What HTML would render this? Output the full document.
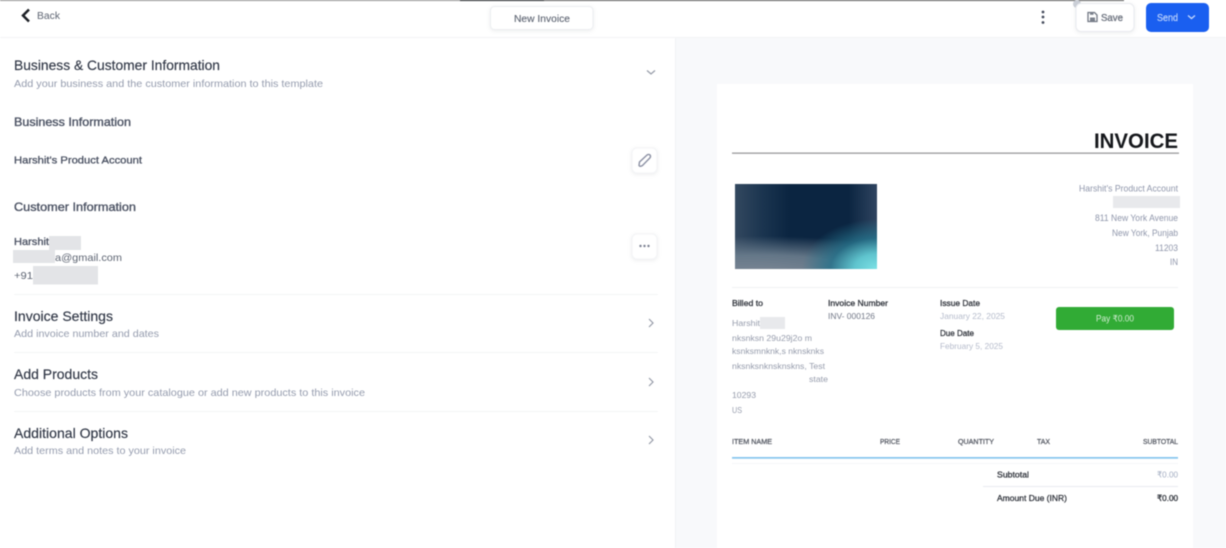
<!DOCTYPE html>
<html lang="en">
<head>
<meta charset="utf-8">
<title>New Invoice</title>
<style>
html,body{margin:0;padding:0;width:1226px;height:548px;overflow:hidden;background:#fff}
#wrap{position:relative;width:1226px;height:548px;overflow:hidden;filter:blur(.45px)}
#logo{position:absolute;left:735px;top:184px;width:142px;height:85px;
background:
radial-gradient(ellipse 75px 50px at 100% 100%,#7ce2e6 0%,#5fc4ce 30%,rgba(38,115,140,.8) 62%,rgba(11,37,64,0) 100%),
radial-gradient(ellipse 190px 38px at 20% 106%,#7c8795 0%,rgba(108,126,142,.9) 50%,rgba(11,37,64,0) 100%),
linear-gradient(90deg,#33485f 0%,#1a344f 20%,#0b2541 38%,#0b2541 80%,#2f4460 100%)}
svg{position:absolute;left:0;top:0}
text{font-family:"Liberation Sans","DejaVu Sans",sans-serif}
.sh{filter:drop-shadow(0 1px 2px rgba(30,40,60,.09))}
.t{font-size:14px;fill:#2f3645;stroke:#2f3645;stroke-width:.15}
.s{font-size:10.5px;fill:#959cae}
.h{font-size:12px;fill:#4a5162;stroke:#4a5162;stroke-width:.35}
.m{font-size:10.5px;fill:#4a5162;stroke:#4a5162;stroke-width:.3}
.b{font-size:10.5px;fill:#5d6472}
.r{font-size:9px;fill:#8f96ab}
.l{font-size:8.5px;fill:#30343c;stroke:#30343c;stroke-width:.28}
.g{font-size:8.5px;fill:#969cac}
.d{font-size:8.5px;fill:#b5bbcb}
.th{font-size:7px;fill:#555963;stroke:#555963;stroke-width:.25}
</style>
</head>
<body>
<div id="wrap">
<svg width="1226" height="548" viewBox="0 0 1226 548" xmlns="http://www.w3.org/2000/svg" style="z-index:0">
  <rect x="675" y="38" width="551" height="510" fill="#f8f9fb"/>
  <rect x="717" y="84" width="476" height="464" fill="#fff"/>
</svg>
<div id="logo"></div>
<svg width="1226" height="548" viewBox="0 0 1226 548" xmlns="http://www.w3.org/2000/svg">
  <!-- top strip -->
  <rect x="0" y="0" width="460" height="1" fill="#8f8f8f"/>
  <rect x="460" y="0" width="84" height="1" fill="#15181c"/>
  <rect x="544" y="0" width="580" height="1" fill="#555"/>
  <rect x="0" y="37" width="1226" height="1" fill="#f3f4f6"/>
  <rect x="675" y="38" width="1" height="510" fill="#f1f2f5"/>

  <!-- header -->
  <path d="M29 9.500 L23 15.500 L29 21.500" fill="none" stroke="#1d2026" stroke-width="2.500"/>
  <text x="37" y="19" font-size="10" fill="#5d6472" textLength="23" lengthAdjust="spacingAndGlyphs">Back</text>
  <rect class="sh" x="490.500" y="6.500" width="102.500" height="23" rx="4" fill="#fff" stroke="#eceef1"/>
  <text x="514" y="22" font-size="10.500" fill="#5d6472" stroke="#5d6472" stroke-width=".12" textLength="56" lengthAdjust="spacingAndGlyphs">New Invoice</text>
  <circle cx="1043" cy="12" r="1.400" fill="#454c5c"/>
  <circle cx="1043" cy="17" r="1.400" fill="#454c5c"/>
  <circle cx="1043" cy="22.500" r="1.400" fill="#454c5c"/>
  <circle cx="1077" cy="4" r="4" fill="#ccd0d8"/>
  <rect class="sh" x="1076" y="3.500" width="58" height="28" rx="5" fill="#fff" stroke="#e9ebef"/>
  <path d="M1088 12.500h6.500l2.500 2.500v6.500h-9z" fill="none" stroke="#717783" stroke-width="1.300"/>
  <rect x="1090" y="17.500" width="5" height="3.500" fill="#7b818c"/>
  <rect x="1090" y="13" width="3.500" height="1.800" fill="#7b818c"/>
  <text x="1101" y="21" font-size="10" fill="#6f7581" stroke="#6f7581" stroke-width=".35" textLength="22" lengthAdjust="spacingAndGlyphs">Save</text>
  <rect x="1146" y="3" width="63" height="29" rx="5" fill="#1a5ff0"/>
  <text x="1157" y="21" font-size="10" fill="#b5cdfb" stroke="#b5cdfb" stroke-width=".3" textLength="21" lengthAdjust="spacingAndGlyphs">Send</text>
  <path d="M1188 15.500l3.500 3 3.500-3" fill="none" stroke="#c6d8fc" stroke-width="1.300"/>

  <!-- left panel -->
  <text class="t" x="14" y="70" textLength="206" lengthAdjust="spacingAndGlyphs">Business &amp; Customer Information</text>
  <text class="s" x="14" y="87" textLength="309" lengthAdjust="spacingAndGlyphs">Add your business and the customer information to this template</text>
  <path d="M647 70.500l4 3.500 4-3.500" fill="none" stroke="#959aa7" stroke-width="1.200"/>

  <text class="h" x="14" y="126" textLength="117" lengthAdjust="spacingAndGlyphs">Business Information</text>
  <text class="m" x="14" y="163.500" textLength="128" lengthAdjust="spacingAndGlyphs">Harshit's Product Account</text>
  <rect class="sh" x="632" y="148" width="25" height="25" rx="5" fill="#fff" stroke="#f3f4f6"/>
  <path d="M639 165.500 L639.500 162 L647 155 Q649 153.800 650.200 155.200 Q651 156.800 649.800 158 L642.500 165.500 Q640 167 639 165.500Z" fill="none" stroke="#8b90a3" stroke-width="1.400"/>

  <text class="h" x="14" y="211" textLength="122" lengthAdjust="spacingAndGlyphs">Customer Information</text>
  <text class="m" x="14" y="245" textLength="35" lengthAdjust="spacingAndGlyphs">Harshit</text>
  <rect x="49" y="236" width="32" height="14" fill="#e3e4e7"/>
  <rect x="13" y="250" width="42" height="13" fill="#e3e4e7"/>
  <text class="b" x="55" y="261" textLength="67" lengthAdjust="spacingAndGlyphs">a@gmail.com</text>
  <text class="b" x="14" y="279" textLength="19" lengthAdjust="spacingAndGlyphs">+91</text>
  <rect x="33" y="266" width="65" height="18.500" fill="#e3e4e7"/>
  <rect class="sh" x="632" y="234" width="25" height="25" rx="5" fill="#fff" stroke="#f3f4f6"/>
  <circle cx="640.500" cy="246" r="1.200" fill="#7d8293"/>
  <circle cx="644.500" cy="246" r="1.200" fill="#7d8293"/>
  <circle cx="648.500" cy="246" r="1.200" fill="#7d8293"/>

  <rect x="14" y="294" width="644" height="1" fill="#f4f5f6"/>
  <text class="t" x="14" y="321" textLength="99" lengthAdjust="spacingAndGlyphs">Invoice Settings</text>
  <text class="s" x="14" y="337" textLength="145" lengthAdjust="spacingAndGlyphs">Add invoice number and dates</text>
  <path d="M649 319l4 4-4 4" fill="none" stroke="#959aa7" stroke-width="1.200"/>

  <rect x="14" y="352" width="644" height="1" fill="#f4f5f6"/>
  <text class="t" x="14" y="379" textLength="84" lengthAdjust="spacingAndGlyphs">Add Products</text>
  <text class="s" x="14" y="396" textLength="351" lengthAdjust="spacingAndGlyphs">Choose products from your catalogue or add new products to this invoice</text>
  <path d="M649 378l4 4-4 4" fill="none" stroke="#959aa7" stroke-width="1.200"/>

  <rect x="14" y="411" width="644" height="1" fill="#f4f5f6"/>
  <text class="t" x="14" y="438" textLength="114" lengthAdjust="spacingAndGlyphs">Additional Options</text>
  <text class="s" x="14" y="454" textLength="172" lengthAdjust="spacingAndGlyphs">Add terms and notes to your invoice</text>
  <path d="M649 436l4 4-4 4" fill="none" stroke="#959aa7" stroke-width="1.200"/>

  <!-- invoice -->
  <text x="1094" y="148" font-size="21" font-weight="bold" fill="#16181c" textLength="84" lengthAdjust="spacingAndGlyphs">INVOICE</text>
  <rect x="732" y="152.500" width="447" height="1.300" fill="#9a9a9c"/>

  <text class="r" x="1079" y="191.500" textLength="99" lengthAdjust="spacingAndGlyphs">Harshit's Product Account</text>
  <rect x="1113" y="196" width="67" height="12" fill="#e8e9ec"/>
  <text class="r" x="1095" y="221" textLength="83" lengthAdjust="spacingAndGlyphs">811 New York Avenue</text>
  <text class="r" x="1112" y="236" textLength="66" lengthAdjust="spacingAndGlyphs">New York, Punjab</text>
  <text class="r" x="1155" y="251" textLength="23" lengthAdjust="spacingAndGlyphs">11203</text>
  <text class="r" x="1170" y="265" textLength="8" lengthAdjust="spacingAndGlyphs">IN</text>
  <rect x="732" y="287" width="446" height="1" fill="#f0f1f3"/>

  <text class="l" x="732" y="306" textLength="31" lengthAdjust="spacingAndGlyphs">Billed to</text>
  <text class="g" x="732" y="326" textLength="28" lengthAdjust="spacingAndGlyphs">Harshit</text>
  <rect x="760" y="317" width="25" height="12" fill="#e8e9ec"/>
  <text class="g" x="732" y="341" textLength="80" lengthAdjust="spacingAndGlyphs">nksnksn 29u29j2o m</text>
  <text class="g" x="732" y="354" textLength="92" lengthAdjust="spacingAndGlyphs">ksnksmnknk,s nknsknks</text>
  <text class="g" x="732" y="369" textLength="93" lengthAdjust="spacingAndGlyphs">nksnksnknsknskns, Test</text>
  <text class="g" x="809" y="382" textLength="19" lengthAdjust="spacingAndGlyphs">state</text>
  <text class="g" x="732" y="398" textLength="24" lengthAdjust="spacingAndGlyphs">10293</text>
  <text class="g" x="732" y="413" textLength="10" lengthAdjust="spacingAndGlyphs">US</text>

  <text class="l" x="828" y="306" textLength="60" lengthAdjust="spacingAndGlyphs">Invoice Number</text>
  <text x="828" y="319" font-size="8.500" fill="#727887" textLength="47" lengthAdjust="spacingAndGlyphs">INV- 000126</text>

  <text class="l" x="940" y="306" textLength="40" lengthAdjust="spacingAndGlyphs">Issue Date</text>
  <text class="d" x="940" y="319" textLength="65" lengthAdjust="spacingAndGlyphs">January 22, 2025</text>
  <text class="l" x="940" y="336" textLength="34" lengthAdjust="spacingAndGlyphs">Due Date</text>
  <text class="d" x="940" y="349" textLength="63" lengthAdjust="spacingAndGlyphs">February 5, 2025</text>

  <rect x="1056" y="307" width="118" height="23" rx="3" fill="#31ab35"/>
  <text x="1096" y="321.500" font-size="9" fill="#d2edd3" textLength="38" lengthAdjust="spacingAndGlyphs">Pay ₹0.00</text>

  <text class="th" x="732" y="444" textLength="40" lengthAdjust="spacingAndGlyphs">ITEM NAME</text>
  <text class="th" x="880" y="444" textLength="20" lengthAdjust="spacingAndGlyphs">PRICE</text>
  <text class="th" x="958" y="444" textLength="36" lengthAdjust="spacingAndGlyphs">QUANTITY</text>
  <text class="th" x="1037" y="444" textLength="13" lengthAdjust="spacingAndGlyphs">TAX</text>
  <text class="th" x="1143" y="444" textLength="35" lengthAdjust="spacingAndGlyphs">SUBTOTAL</text>
  <rect x="732" y="457" width="446" height="1.700" fill="#86c5ee"/>
  <rect x="732" y="463" width="446" height="1" fill="#f5f6f8"/>

  <text class="l" x="997" y="477.500" textLength="32" lengthAdjust="spacingAndGlyphs">Subtotal</text>
  <text x="1157" y="477.500" font-size="8.500" fill="#a3adc2" textLength="21" lengthAdjust="spacingAndGlyphs">₹0.00</text>
  <rect x="983" y="486" width="195" height="1" fill="#e9ebef"/>
  <text class="l" x="997" y="501" textLength="70" lengthAdjust="spacingAndGlyphs">Amount Due (INR)</text>
  <text class="l" x="1157" y="501" textLength="21" lengthAdjust="spacingAndGlyphs">₹0.00</text>
</svg>
</div>
</body>
</html>
